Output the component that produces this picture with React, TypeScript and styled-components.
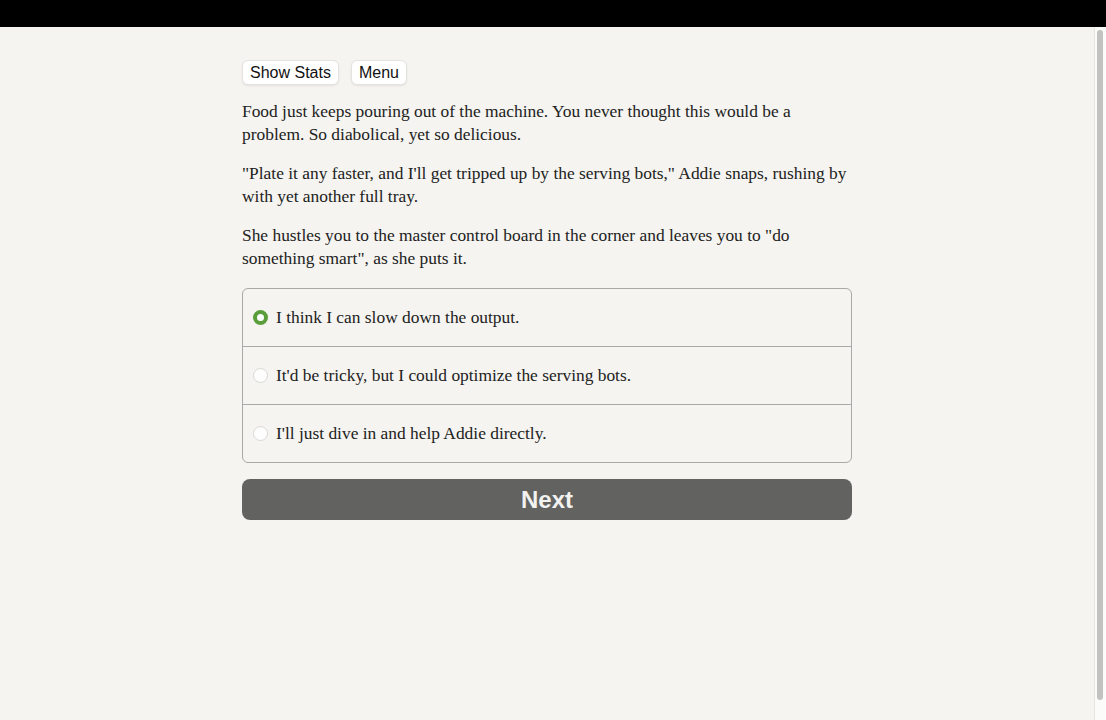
import React, { useState } from "react"
import styled, { createGlobalStyle } from "styled-components"

const Global = createGlobalStyle`
  html, body {
    margin: 0;
    padding: 0;
    height: 100%;
    overflow: hidden;
  }
  #root {
    height: 100%;
  }
`

const Page = styled.div`
  display: flex;
  flex-direction: column;
  height: 720px;
  background: #f5f4f0;
`

const TopBar = styled.div`
  height: 27px;
  background: #000;
  flex-shrink: 0;
`

const Body = styled.div`
  flex: 1;
  display: flex;
  min-height: 0;
`

const Main = styled.main`
  flex: 1;
  padding-top: 33px;
`

const Scroll = styled.div`
  width: 12px;
  background: #fbfbfa;
  border-left: 1px solid #e6e5e1;
  padding: 3px 3px 20px 2px;
  box-sizing: border-box;
  display: flex;
`

const Thumb = styled.div`
  flex: 1;
  background: #c2c2c0;
  border-radius: 3px;
`

const Column = styled.div`
  width: 610px;
  margin: 0 auto;
`

const Toolbar = styled.div`
  display: flex;
  gap: 12px;
  margin-bottom: 15px;
`

const SmallButton = styled.button`
  font-family: "Liberation Sans", Arial, sans-serif;
  font-size: 16px;
  color: #111;
  background: #fff;
  border: 1px solid #e4e3df;
  border-radius: 6px;
  height: 25px;
  padding: 0 7px;
  box-shadow: 0 1px 2px rgba(0, 0, 0, 0.08);
  cursor: pointer;
`

const Story = styled.p`
  font-family: "Liberation Serif", "Times New Roman", serif;
  font-size: 17.4px;
  line-height: 23px;
  color: #222;
  margin: 0 0 16px 0;
`

const Choices = styled.div`
  border: 1px solid #a9a9a7;
  border-radius: 6px;
  margin-top: 18px;
  overflow: hidden;
`

const Choice = styled.label`
  display: flex;
  align-items: center;
  height: 57px;
  padding-left: 10px;
  gap: 8px;
  font-family: "Liberation Serif", "Times New Roman", serif;
  font-size: 17.4px;
  color: #222;
  cursor: pointer;
  & + & {
    border-top: 1px solid #a9a9a7;
  }
`

const Radio = styled.span<{ $on: boolean }>`
  width: 15px;
  height: 15px;
  border-radius: 50%;
  box-sizing: border-box;
  flex-shrink: 0;
  background: ${p => (p.$on ? "#fff" : "#fdfdfd")};
  border: ${p => (p.$on ? "4px solid #5a9e3c" : "1px solid #d8d7d3")};
`

const NextButton = styled.button`
  display: block;
  width: 100%;
  height: 41px;
  margin-top: 16px;
  border: none;
  border-radius: 8px;
  background: #626260;
  color: #f2f2f0;
  font-family: "Liberation Sans", Arial, sans-serif;
  font-weight: bold;
  font-size: 24px;
  cursor: pointer;
`

const options = [
  "I think I can slow down the output.",
  "It'd be tricky, but I could optimize the serving bots.",
  "I'll just dive in and help Addie directly.",
]

export default function App() {
  const [picked, setPicked] = useState(0)
  return (
    <Page>
      <Global />
      <TopBar />
      <Body>
        <Main>
          <Column>
            <Toolbar>
              <SmallButton>Show Stats</SmallButton>
              <SmallButton>Menu</SmallButton>
            </Toolbar>
            <Story>
              Food just keeps pouring out of the machine. You never thought this would be a
              problem. So diabolical, yet so delicious.
            </Story>
            <Story>
              "Plate it any faster, and I'll get tripped up by the serving bots," Addie snaps,
              rushing by with yet another full tray.
            </Story>
            <Story>
              She hustles you to the master control board in the corner and leaves you to "do
              something smart", as she puts it.
            </Story>
            <Choices>
              {options.map((o, i) => (
                <Choice key={i} onClick={() => setPicked(i)}>
                  <Radio $on={picked === i} />
                  {o}
                </Choice>
              ))}
            </Choices>
            <NextButton>Next</NextButton>
          </Column>
        </Main>
        <Scroll>
          <Thumb />
        </Scroll>
      </Body>
    </Page>
  )
}
